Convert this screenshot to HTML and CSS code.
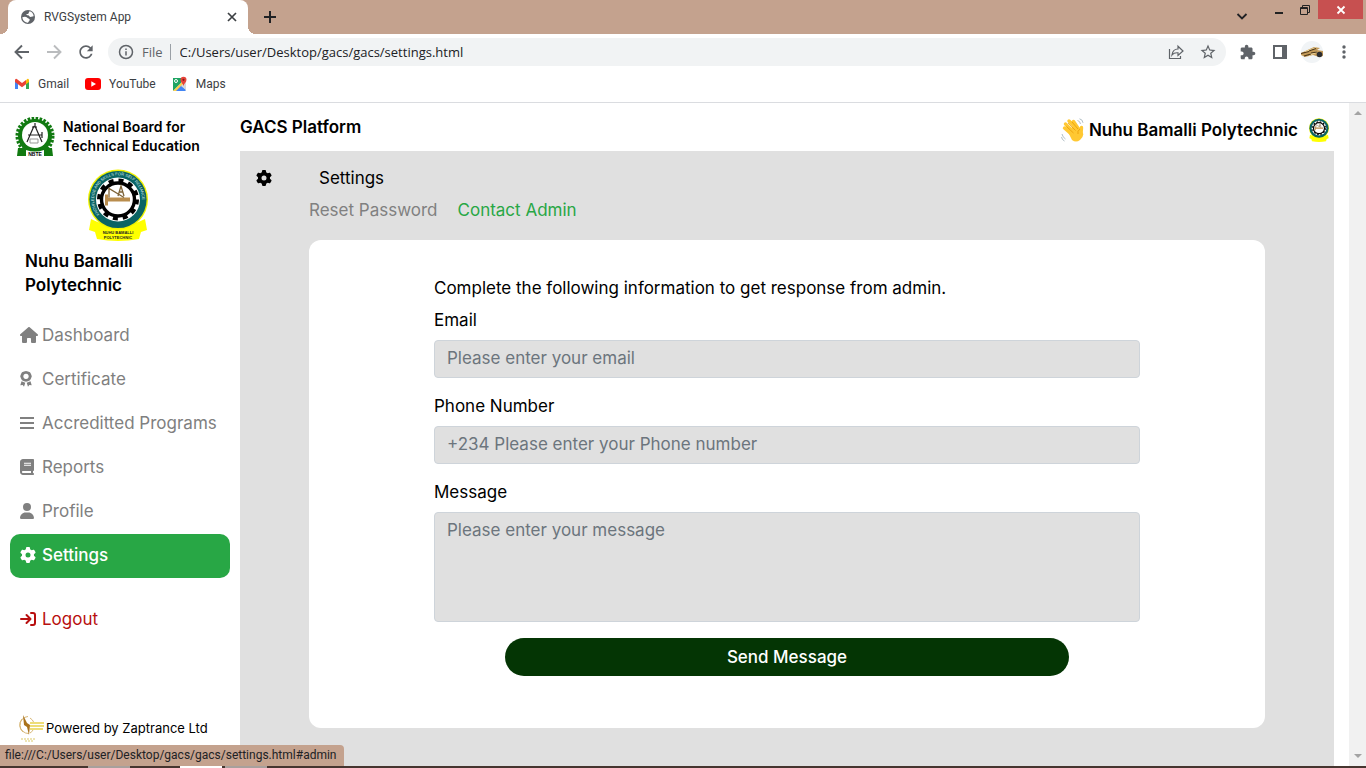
FILE: index.html
```html
<!DOCTYPE html>
<html lang="en">
<head>
<meta charset="utf-8">
<meta name="viewport" content="width=device-width, initial-scale=1">
<title>RVGSystem App</title>
<link rel="stylesheet" href="styles.css">
</head>
<body>
<svg class="defs" aria-hidden="true">
  <symbol id="gear" viewBox="0 0 512 512"><path d="M495.9 166.6c3.2 8.7 .5 18.4-6.4 24.6l-43.3 39.4c1.1 8.3 1.7 16.8 1.7 25.4s-.6 17.1-1.7 25.4l43.3 39.4c6.9 6.2 9.6 15.9 6.4 24.6c-4.4 11.9-9.7 23.3-15.8 34.3l-4.7 8.1c-6.6 11-14 21.4-22.1 31.2c-5.9 7.2-15.7 9.6-24.5 6.8l-55.7-17.7c-13.4 10.3-28.2 18.9-44 25.4l-12.5 57.1c-2 9.1-9 16.3-18.2 17.8c-13.8 2.3-28 3.5-42.5 3.5s-28.7-1.2-42.5-3.5c-9.2-1.5-16.2-8.7-18.2-17.8l-12.5-57.1c-15.8-6.5-30.6-15.1-44-25.4L83.1 425.9c-8.8 2.8-18.6 .3-24.5-6.8c-8.1-9.8-15.5-20.2-22.1-31.2l-4.7-8.1c-6.1-11-11.4-22.4-15.8-34.3c-3.2-8.7-.5-18.4 6.4-24.6l43.3-39.4C64.6 273.1 64 264.6 64 256s.6-17.1 1.7-25.4L22.4 191.2c-6.9-6.2-9.6-15.9-6.4-24.6c4.4-11.9 9.7-23.3 15.8-34.3l4.7-8.1c6.6-11 14-21.4 22.1-31.2c5.9-7.2 15.7-9.6 24.5-6.8l55.7 17.7c13.4-10.3 28.2-18.9 44-25.4l12.5-57.1c2-9.1 9-16.3 18.2-17.8C227.3 1.2 241.5 0 256 0s28.7 1.2 42.5 3.5c9.2 1.5 16.2 8.7 18.2 17.8l12.5 57.1c15.8 6.5 30.6 15.1 44 25.4l55.7-17.7c8.8-2.8 18.6-.3 24.5 6.8c8.1 9.8 15.5 20.2 22.1 31.2l4.7 8.1c6.1 11 11.4 22.4 15.8 34.3zM256 336a80 80 0 1 0 0-160 80 80 0 1 0 0 160z"/></symbol>
  <symbol id="crest" viewBox="0 0 62 72">
    <path d="M4 50 2 61l6 2 2 7q21 4 42 0l2-7 6-2-2-11q-27 14-54 0z" fill="#ffff00"/>
    <circle cx="31" cy="30.500" r="30" fill="#f2f200"/>
    <circle cx="31" cy="30.500" r="28.600" fill="#0b6464"/>
    <circle cx="31" cy="30.500" r="22" fill="#fff"/>
    <circle cx="31" cy="30.500" r="19" fill="none" stroke="#000" stroke-width="4" stroke-dasharray="4.970 4.970"/>
    <circle cx="31" cy="30.500" r="16.500" fill="none" stroke="#000" stroke-width="3.400"/>
    <path d="M18 25.500h3v3h22v4H21v4h-3z" fill="#b98d4e"/>
    <path d="M22 28.500v-9l15 9M31 27l3-10 3 10M32 23h4" fill="none" stroke="#7d6236" stroke-width="1.300"/>
  </symbol>
</svg>

<div class="browser">
  <div class="tabstrip">
    <div class="tab">
      <svg class="i16" viewBox="0 0 24 24"><circle cx="12" cy="12" r="10.500" fill="#5f6368"/><path d="M3.500 12.500c3-1.500 6-1 7.500.500 1 1.500 3 1 3.500 2.500.500 2-1.500 3-2.500 5-3.500.300-8-2.500-8.500-8zM9.500 7.500c1-.500 2 .500 3-.500s.500-2.500 2-3.500c3 .700 5.500 3.200 6 7-1 1.500-3 .500-4.500 1.500-2 0-2-2-3.500-2.500-1.500.200-3-.500-3-2z" fill="#fff"/></svg>
      <span class="tab-title">RVGSystem App</span>
      <button class="tab-close" aria-label="Close tab"><svg class="i16" viewBox="0 0 16 16" fill="none" stroke="#3c4043" stroke-width="1.700"><path d="m4 4 8 8M12 4l-8 8"/></svg></button>
    </div>
    <button class="new-tab" aria-label="New tab"><svg class="i16" viewBox="0 0 16 16" fill="none" stroke="#202124" stroke-width="2"><path d="M8 2v12M2 8h12"/></svg></button>
    <div class="window-buttons">
      <button class="win search-tabs" aria-label="Search tabs"><svg class="i12" viewBox="0 0 12 12" fill="none" stroke="#202124" stroke-width="1.800"><path d="m1.500 4 4.500 4.500L10.500 4"/></svg></button>
      <button class="win" aria-label="Minimize"><svg class="i12" viewBox="0 0 12 12"><path d="M2 8h8v2H2z" fill="#222"/></svg></button>
      <button class="win" aria-label="Restore"><svg class="i12" viewBox="0 0 12 12" fill="none" stroke="#222"><path d="M3.500 3V1.500h7v7H9M1.500 3.500h7v7h-7zM1.500 4.500h7"/></svg></button>
      <button class="win win-close" aria-label="Close"><svg class="i12" viewBox="0 0 12 12" fill="none" stroke="#fff" stroke-width="1.800"><path d="m2.500 2.500 7 7M9.500 2.500l-7 7"/></svg></button>
    </div>
  </div>

  <div class="toolbar">
    <button class="tool" aria-label="Back"><svg class="i20" viewBox="0 0 20 20" fill="none" stroke="#5f6368" stroke-width="1.900"><path d="M17 10H4M10 3.500 3.500 10l6.500 6.500"/></svg></button>
    <button class="tool" aria-label="Forward"><svg class="i20" viewBox="0 0 20 20" fill="none" stroke="#babcbe" stroke-width="1.900"><path d="M3 10h13M10 3.500l6.500 6.500-6.500 6.500"/></svg></button>
    <button class="tool" aria-label="Reload"><svg class="i20" viewBox="0 0 24 24" fill="#5f6368"><path d="M17.650 6.350C16.200 4.900 14.210 4 12 4c-4.420 0-7.990 3.580-7.990 8s3.570 8 7.990 8c3.730 0 6.840-2.550 7.730-6h-2.080c-.820 2.330-3.040 4-5.650 4-3.310 0-6-2.690-6-6s2.690-6 6-6c1.660 0 3.140.690 4.220 1.780L13 11h7V4l-2.350 2.350z"/></svg></button>
    <div class="omnibox">
      <svg class="i16" viewBox="0 0 16 16" fill="none" stroke="#5f6368" stroke-width="1.500"><circle cx="8" cy="8" r="6.500"/><path d="M8 7.200v4.200M8 4.400v1.600"/></svg>
      <span class="scheme">File</span>
      <input class="url" type="text" aria-label="Address" value="C:/Users/user/Desktop/gacs/gacs/settings.html">
      <button class="tool" aria-label="Share"><svg class="i16" viewBox="0 0 16 16" fill="none" stroke="#5f6368" stroke-width="1.200"><path d="M1.500 5v9.500h11V12M4 11c.500-4 3-6 6-6V2.200L15 7l-5 4.500V8.800c-3-.300-4.500.200-6 2.200z"/></svg></button>
      <button class="tool" aria-label="Bookmark"><svg class="i18" viewBox="0 0 24 24" fill="#5f6368"><path d="M22 9.240l-7.190-.620L12 2 9.190 8.630 2 9.240l5.460 4.730L5.820 21 12 17.270 18.180 21l-1.630-7.030L22 9.240zM12 15.400l-3.760 2.270 1-4.280-3.320-2.880 4.380-.380L12 6.100l1.710 4.040 4.380.380-3.320 2.880 1 4.280L12 15.400z"/></svg></button>
    </div>
    <button class="tool" aria-label="Extensions"><svg class="i16" viewBox="1 0 23 23" fill="#5f6368"><path d="M20.500 11H19V7c0-1.100-.900-2-2-2h-4V3.500C13 2.120 11.880 1 10.500 1S8 2.120 8 3.500V5H4c-1.100 0-1.990.900-1.990 2v3.800H3.500c1.490 0 2.700 1.210 2.700 2.700s-1.210 2.700-2.700 2.700H2V20c0 1.100.900 2 2 2h3.800v-1.500c0-1.490 1.210-2.700 2.700-2.700 1.490 0 2.700 1.210 2.700 2.700V22H17c1.100 0 2-.900 2-2v-4h1.500c1.380 0 2.500-1.120 2.500-2.500S21.880 11 20.500 11z"/></svg></button>
    <button class="tool" aria-label="Side panel"><svg class="i16" viewBox="0 0 16 16"><path d="M1 1h14v14H1zM3 3v10h7V3z" fill="#5f6368" fill-rule="evenodd"/></svg></button>
    <button class="tool" aria-label="Profile"><svg class="i22" viewBox="0 0 22 22"><circle cx="11" cy="11" r="11" fill="#f1f4f6"/><path d="m0 12 13-6 6 1-3 2 6 1v5l-4 1-6-2-8 2-4-2z" fill="#c39a58"/><path d="m4 11 11-4M8 14l8-3" stroke="#f2d79b" stroke-width="1.500"/><path d="m0 12.500 8-2M8 10l7-2.500M3 15l7-2M10 12l6-1" stroke="#4a3417" stroke-width="1.200"/><circle cx="18.500" cy="13.500" r="2.800" fill="#2c2d30"/></svg></button>
    <button class="tool" aria-label="Menu"><svg class="i16" viewBox="0 0 16 16" fill="#5f6368"><circle cx="8" cy="3" r="1.700"/><circle cx="8" cy="8" r="1.700"/><circle cx="8" cy="13" r="1.700"/></svg></button>
  </div>

  <nav class="bookmarks" aria-label="Bookmarks">
    <a href="#gmail"><svg class="i16" viewBox="0 0 16 16"><path d="M1 4v9h3V7z" fill="#4285f4"/><path d="M15 4v9h-3V7z" fill="#34a853"/><path d="M12 4.500 13.200 3Q15 2.300 15 4.500V6l-3 2.300z" fill="#fbbc04"/><path d="M4 8.300 1 6V4.500Q1 2.300 2.800 3L8 7l4-3v4.300l-4 3z" fill="#ea4335"/></svg>Gmail</a>
    <a href="#youtube"><svg class="i16" viewBox="0 0 16 16"><rect y="2" width="16" height="12" rx="3" fill="#f00"/><path d="m6.300 5.300 4.700 2.700-4.700 2.700z" fill="#fff"/></svg>YouTube</a>
    <a href="#maps"><svg class="i16" viewBox="0 0 16 16"><path d="M1 2h13v13H1z" fill="#e6e6e6"/><path d="M1 2h8v5l-8 8z" fill="#1fa463"/><path d="m8 8 6 6-1 1H3z" fill="#4285f4"/><path d="M1 15 12 4v3L4 15z" fill="#ffd04b"/><path d="m9 10 5-3v7z" fill="#d5d8dc"/><circle cx="4" cy="5" r="1.500" fill="none" stroke="#fff"/><path d="M11.500 10C11 7.500 8.500 6.500 8.500 3.800a3 3 0 0 1 6 0C14.500 6.500 12 7.500 11.500 10z" fill="#e5443a"/><circle cx="11.500" cy="3.800" r="1.100" fill="#8a1a14"/></svg>Maps</a>
  </nav>

  <div class="viewport">
    <aside class="sidebar">
      <div class="board">
        <svg class="board-logo" viewBox="0 0 40 40">
          <circle cx="20" cy="19" r="17.500" fill="none" stroke="#117a11" stroke-width="4" stroke-dasharray="2.500 1.430"/>
          <circle cx="20" cy="19" r="17" fill="#117a11"/>
          <circle cx="20" cy="18" r="13" fill="#fff"/>
          <path d="M3 31h10v8H2zM27 31h10l1 8H27z" fill="#117a11"/>
          <path d="M11 33q9 3 18 0v6q-9 2-18 0z" fill="#fff"/>
          <path d="m19 9-7 16M20 9l7 16M13 18h14M20 6v4M17 10h5M27 15v6" fill="none" stroke="#222" stroke-width="1.200"/>
          <path d="M15 22h8v4h-8z" fill="#fff" stroke="#999"/>
          <text class="board-text" x="20" y="39">NBTE</text>
        </svg>
        <div class="board-name">National Board for<br>Technical Education</div>
      </div>
      <svg class="school-crest" viewBox="0 0 62 72" role="img" aria-label="Nuhu Bamalli Polytechnic crest">
        <use href="#crest" width="62" height="72"/>
        <path id="ring" d="M12.500 45.500A24 24 0 1 1 49.500 45.500" fill="none"/>
        <text class="ring-text"><textPath href="#ring">KNOWLEDGE AND SKILLS FOR SELF RELIANCE</textPath></text>
        <text class="ribbon-text" x="31" y="65">NUHU BAMALLI</text>
        <text class="ribbon-text" x="31" y="70">POLYTECHNIC</text>
      </svg>
      <div class="school-name">Nuhu Bamalli<br>Polytechnic</div>
      <nav class="menu" aria-label="Main">
        <a href="#dashboard"><span class="slot"><svg class="home" viewBox="0 0 576 512"><path d="M575.800 255.500c0 18-15 32.100-32 32.100h-32l.700 160.200V472c0 22-18 40-40 40H392c-22 0-40-18-40-40V384c0-18-14-32-32-32h-64c-18 0-32 14-32 32v88c0 22-18 40-40 40h-80c-22 0-40-18-40-40V287.600H32c-18 0-32-14-32-32.100c0-9 3-17 10-24L266.400 8c7-7 15-8 22-8s15 2 21 7L564.800 231.500c8 7 12 15 11 24z"/></svg></span>Dashboard</a>
        <a href="#certificate"><span class="slot"><svg class="award" viewBox="0 0 12 16"><path fill-rule="evenodd" d="M6 0 8 .500 10 1.300 11 3 11.800 5.200 11 7.500 10 9.300 8 10.200 6 10.800 4 10.200 2 9.300 1 7.500.200 5.200 1 3 2 1.300 4 .500zM6 2.700a2.700 2.700 0 1 0 .010 0z"/><path d="m1.500 10.300 3.800 1.500L4 15.800l-1.300-1.900-2.400.400zM10.500 10.300l-3.800 1.500L8 15.800l1.300-1.900 2.400.400z"/></svg></span>Certificate</a>
        <a href="#programs"><span class="slot"><svg class="bars" viewBox="0 0 14 16"><path d="M0 2h14v2H0zM0 7h14v2H0zM0 12h14v2H0z"/></svg></span>Accreditted Programs</a>
        <a href="#reports"><span class="slot"><svg class="bars" viewBox="0 0 448 512"><path fill-rule="evenodd" d="M96 0C43 0 0 43 0 96v320c0 53 43 96 96 96h320c18 0 32-14 32-32s-14-32-32-32v-64c18 0 32-14 32-32V32c0-18-14-32-32-32zM96 384h256v64H96c-18 0-32-14-32-32s14-32 32-32zM128 120h224v32H128zM128 184h224v32H128z"/></svg></span>Reports</a>
        <a href="#profile"><span class="slot"><svg class="bars" viewBox="0 0 448 512"><path d="M224 256A128 128 0 1 0 224 0a128 128 0 1 0 0 256zm-45.700 48C79.800 304 0 383.800 0 482.300C0 498.700 13.300 512 29.700 512H418.300c16.400 0 29.700-13.300 29.700-29.700C448 383.800 368.200 304 269.700 304H178.300z"/></svg></span>Profile</a>
        <a class="active" href="#settings"><span class="slot"><svg class="i16"><use href="#gear"/></svg></span>Settings</a>
        <a class="logout" href="#logout"><span class="slot"><svg class="i16" viewBox="0 0 16 16" fill="none" stroke="#b80f0f" stroke-width="2" stroke-linecap="round" stroke-linejoin="round"><path d="M1 8h9M6.500 4l4 4-4 4M11 2h2q2 0 2 2v8q0 2-2 2h-2"/></svg></span>Logout</a>
      </nav>
      <div class="powered">
        <svg class="zap" viewBox="0 0 26 28"><path d="M10 2.500a8.500 8.500 0 1 0 1 17M4 5a9 9 0 0 0 1 13M12 4q3 2 3.500 4M15 16q-1 2-3 3" fill="none" stroke="#d8b878"/><path d="m5 1 1 10 3 2 2 8 1-10-3-2z" fill="#a9721b"/><path d="M12 9h14M12 12h14M12 15h13" stroke="#e8d24c" stroke-width="1.500"/><path d="M3 25h15M7 27h8" stroke="#e8dc9c" stroke-width="1.500" stroke-dasharray="2 1"/></svg>
        Powered by Zaptrance Ltd
      </div>
    </aside>

    <main class="main">
      <header class="page-head">
        <h1>GACS Platform</h1>
        <div class="account">
          <svg class="wave" viewBox="0 0 24 24">
            <path d="m3.500 10 8 7M4.500 6l9 9M8 3l9 9M12.500 3.500l6 9M20.500 9.500 20 16" stroke="#ffc832" stroke-width="3.400" stroke-linecap="round"/>
            <path d="m7 14 6-7 6 5 3 3q1 4-3 7-4 3-8 0z" fill="#ffc832"/>
            <path d="m5.500 8.500 7 6.500M7 5l7.500 7.500M11 4l6 7M19 11q-3 2-2 5" fill="none" stroke="#e59600" stroke-width=".700"/>
            <path d="M16.500 2.500q2.500.500 3 3.500M18.500.800q3 .500 3.500 4M1 16q.500 3 3.500 5M.500 19q.500 3 3 4" fill="none" stroke="#b0bec5"/>
          </svg>
          <span>Nuhu Bamalli Polytechnic</span>
          <svg class="mini-crest"><use href="#crest"/></svg>
        </div>
      </header>
      <section class="content">
        <div class="section-title"><svg class="i16"><use href="#gear"/></svg><h2>Settings</h2></div>
        <nav class="tabs" aria-label="Settings sections">
          <a href="#reset">Reset Password</a>
          <a class="current" href="#admin">Contact Admin</a>
        </nav>
        <form class="card">
          <p>Complete the following information to get response from admin.</p>
          <label for="email">Email</label>
          <input class="field" id="email" type="email" placeholder="Please enter your email">
          <label for="phone">Phone Number</label>
          <input class="field" id="phone" type="tel" placeholder="+234 Please enter your Phone number">
          <label for="message">Message</label>
          <textarea class="field" id="message" placeholder="Please enter your message"></textarea>
          <button class="send" type="button">Send Message</button>
        </form>
      </section>
    </main>

    <div class="scrollbar" aria-hidden="true">
      <svg class="arrow" viewBox="0 0 8 5"><path d="M0 5 4 1l4 4z"/></svg>
      <svg class="arrow" viewBox="0 0 8 5"><path d="m0 0 4 4 4-4z"/></svg>
    </div>
    <div class="status">file:///C:/Users/user/Desktop/gacs/gacs/settings.html#admin</div>
  </div>
  <div class="taskbar"><i></i><i class="lit"></i><i></i></div>
</div>
</body>
</html>
```
FILE: styles.css
```css
* { box-sizing: border-box; }

body {
  margin: 0;
  background: #fff;
  color: #000;
  font: 400 17px/24px Inter, "Open Sans", sans-serif;
}

button, input, textarea { font: inherit; margin: 0; }
button { border: 0; padding: 0; background: none; cursor: pointer; }
a { color: inherit; text-decoration: none; }
h1, h2, p { margin: 0; font-size: inherit; }
svg { display: block; flex: none; }

.defs { position: absolute; width: 0; height: 0; }
.i12 { width: 12px; height: 12px; }
.i16 { width: 16px; height: 16px; }
.i18 { width: 18px; height: 18px; }
.i20 { width: 20px; height: 20px; }
.i22 { width: 22px; height: 22px; }

.browser { display: flex; flex-direction: column; min-height: 100vh; }

/* Window frame */
.tabstrip {
  display: flex;
  height: 34px;
  padding-left: 8px;
  background: #c4a28e;
}
.tab {
  position: relative;
  display: flex;
  align-items: center;
  gap: 8px;
  width: 240px;
  padding: 0 8px 0 12px;
  border-radius: 8px 8px 0 0;
  background: #fff;
}
.tab::before, .tab::after {
  content: "";
  position: absolute;
  bottom: 0;
  width: 8px;
  height: 8px;
}
.tab::before { left: -8px; background: radial-gradient(circle at 0 0, #c4a28e 8px, #fff 8px); }
.tab::after { right: -8px; background: radial-gradient(circle at 100% 0, #c4a28e 8px, #fff 8px); }
.tab-title, .bookmarks, .status { font-family: Roboto, "Open Sans", sans-serif; font-size: 12px; }
.tab-title { flex: 1; color: #3c4043; }
.new-tab { padding: 0 14px; }
.window-buttons { display: flex; align-items: flex-start; margin-left: auto; padding-right: 3px; }
.win { display: flex; justify-content: center; align-items: center; width: 26px; height: 19px; }
.search-tabs { width: 48px; height: 32px; }
.win-close { width: 45px; background: #c75050; }

.toolbar { display: flex; align-items: center; height: 36px; padding: 0 6px; }
.tool { display: flex; justify-content: center; align-items: center; width: 32px; height: 28px; }
.omnibox {
  display: flex;
  flex: 1;
  align-items: center;
  height: 28px;
  margin: 0 6px;
  padding: 0 2px 0 10px;
  border-radius: 14px;
  background: #f1f3f4;
  font: 400 13px/16px "Open Sans", "Noto Sans", sans-serif;
}
.scheme { margin-left: 8px; padding-right: 7px; border-right: 1px solid #9aa0a6; color: #5f6368; }
.url { flex: 1; min-width: 0; padding: 0 0 0 9px; border: 0; outline: 0; background: none; color: #202124; }

.bookmarks {
  display: flex;
  gap: 16px;
  height: 33px;
  padding: 0 14px 4px;
  border-bottom: 1px solid #dadce0;
  color: #3c4043;
}
.bookmarks a { display: flex; align-items: center; gap: 8px; }

/* Page */
.viewport { position: relative; display: flex; flex: 1; }

.sidebar { display: flex; flex-direction: column; width: 240px; padding: 14px 10px 8px; }
.board { display: flex; gap: 8px; padding-left: 5px; }
.board-logo { width: 40px; height: 40px; }
.board-name { font-size: 14px; font-weight: 600; line-height: 19px; }
.board-text { font: 700 5px "Liberation Sans", sans-serif; text-anchor: middle; }
.school-crest { width: 62px; height: 72px; margin: 12px auto 8px 77px; }
.ring-text { font: 400 4px "Liberation Sans", sans-serif; fill: #d9eaea; }
.ribbon-text { font: 700 4px "Liberation Sans", sans-serif; text-anchor: middle; fill: #222; }
.school-name { padding-left: 15px; font-weight: 600; }

.menu { display: flex; flex-direction: column; margin-top: 17px; color: #808080; }
.menu a { display: flex; align-items: center; height: 44px; padding: 0 10px 2px; border-radius: 10px; }
.menu svg { fill: currentColor; }
.slot { width: 22px; }
.home { width: 18px; height: 16px; }
.award { width: 12px; height: 16px; }
.bars { width: 14px; height: 16px; }
.menu .active { background: #28a745; color: #fff; font-weight: 500; }
.menu .logout { margin-top: 20px; color: #b80f0f; }
.menu .logout svg { fill: none; }

.powered { display: flex; align-items: center; gap: 2px; margin-top: auto; padding: 0 8px 16px; font-size: 13px; }
.zap { width: 26px; height: 28px; }

.main { display: flex; flex: 1; flex-direction: column; margin-right: 15px; }
.page-head { display: flex; justify-content: space-between; align-items: center; height: 48px; }
.page-head h1, .account { font-weight: 600; }
.account { display: flex; align-items: center; gap: 4px; padding: 6px 4px 0 0; }
.wave { width: 24px; height: 24px; }
.mini-crest { width: 22px; height: 24px; margin-left: 6px; }

.content { flex: 1; padding: 15px 69px 38px; background: #e0e0e0; }
.section-title { display: flex; align-items: center; gap: 47px; margin-left: -53px; }
.section-title h2 { font-weight: 400; }
.tabs { display: flex; gap: 20px; margin-top: 8px; color: #808080; }
.tabs .current { color: #28a745; }

.card {
  display: flex;
  flex-direction: column;
  margin-top: 18px;
  padding: 36px 125px 52px;
  border-radius: 12px;
  background: #fff;
}
.card p, .card label { margin-bottom: 8px; }
.field {
  width: 100%;
  height: 38px;
  margin-bottom: 16px;
  padding: 5px 12px 7px;
  border: 1px solid #ced4da;
  border-radius: 4px;
  background: #e0e0e0;
  resize: none;
}
.field::placeholder { color: #6c757d; opacity: 1; }
textarea.field { height: 110px; }
.send {
  width: 80%;
  height: 38px;
  margin: 0 auto;
  border-radius: 19px;
  background: #043504;
  color: #fff;
  font-weight: 500;
}

.scrollbar {
  display: flex;
  flex-direction: column;
  justify-content: space-between;
  align-items: center;
  width: 17px;
  padding: 7px 0;
  background: #f1f1f1;
}
.arrow { width: 8px; height: 5px; fill: #a3a3a3; }

.status {
  position: absolute;
  left: 0;
  bottom: 0;
  padding: 0 7px 0 5px;
  border-radius: 0 4px 0 0;
  background: #c4a28e;
  line-height: 21px;
  color: #202124;
}
.taskbar { display: flex; gap: 3px; height: 2px; padding-left: 88px; background: #46352f; }
.taskbar i { width: 42px; background: #a8a09c; }
.taskbar .lit { margin-left: 47px; background: #fff; }
```
